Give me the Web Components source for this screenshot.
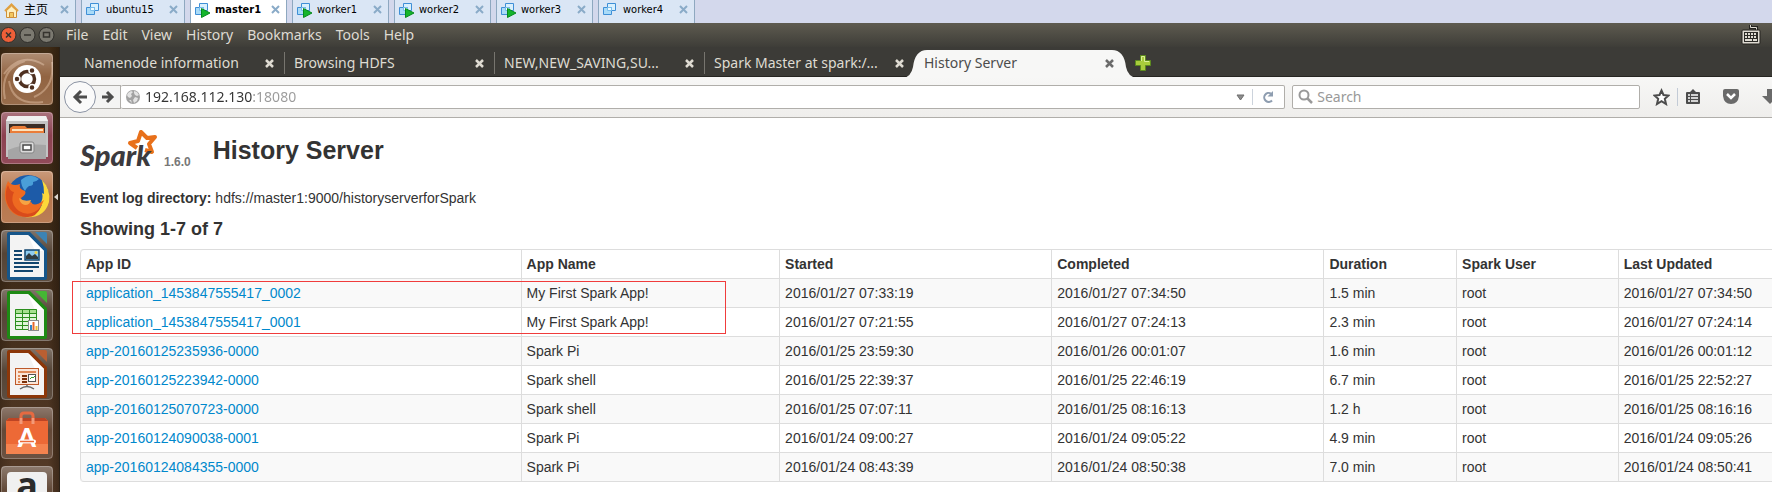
<!DOCTYPE html>
<html lang="en">
<head>
<meta charset="utf-8">
<title>History Server</title>
<style>
  body {
    margin: 0;
    height: 100vh;
    overflow: hidden;
    display: flex;
    flex-direction: column;
    background: #fff;
    font-family: "Noto Sans", "Open Sans", sans-serif;
    font-size: 14px;
  }

  .workspace {
    flex: 1;
    min-height: 0;
    display: flex;
  }

  .browser {
    flex: 1;
    min-width: 0;
    display: flex;
    flex-direction: column;
  }
</style>
</head>
<body>
  <vm-strip>
    <vm-tab icon="home">主页</vm-tab>
    <vm-tab icon="off">ubuntu15</vm-tab>
    <vm-tab icon="on" active>master1</vm-tab>
    <vm-tab icon="on">worker1</vm-tab>
    <vm-tab icon="on">worker2</vm-tab>
    <vm-tab icon="on">worker3</vm-tab>
    <vm-tab icon="off">worker4</vm-tab>
  </vm-strip>
  <menu-panel></menu-panel>
  <div class="workspace">
    <app-dock></app-dock>
    <div class="browser">
      <tab-bar>
        <browser-tab>Namenode information</browser-tab>
        <browser-tab>Browsing HDFS</browser-tab>
        <browser-tab>NEW,NEW_SAVING,SU...</browser-tab>
        <browser-tab>Spark Master at spark:/...</browser-tab>
        <browser-tab active>History Server</browser-tab>
      </tab-bar>
      <nav-toolbar></nav-toolbar>
      <history-page></history-page>
    </div>
  </div>

<script>
const MENUS = ["File", "Edit", "View", "History", "Bookmarks", "Tools", "Help"];

const COLUMNS = [
  { name: "App ID", width: "25.9%" },
  { name: "App Name", width: "15.2%" },
  { name: "Started", width: "16%" },
  { name: "Completed", width: "16%" },
  { name: "Duration", width: "7.8%" },
  { name: "Spark User", width: "9.5%" },
  { name: "Last Updated", width: "9.6%" },
];

const APPS = [
  ["application_1453847555417_0002", "My First Spark App!", "2016/01/27 07:33:19", "2016/01/27 07:34:50", "1.5 min", "root", "2016/01/27 07:34:50"],
  ["application_1453847555417_0001", "My First Spark App!", "2016/01/27 07:21:55", "2016/01/27 07:24:13", "2.3 min", "root", "2016/01/27 07:24:14"],
  ["app-20160125235936-0000", "Spark Pi", "2016/01/25 23:59:30", "2016/01/26 00:01:07", "1.6 min", "root", "2016/01/26 00:01:12"],
  ["app-20160125223942-0000", "Spark shell", "2016/01/25 22:39:37", "2016/01/25 22:46:19", "6.7 min", "root", "2016/01/25 22:52:27"],
  ["app-20160125070723-0000", "Spark shell", "2016/01/25 07:07:11", "2016/01/25 08:16:13", "1.2 h", "root", "2016/01/25 08:16:16"],
  ["app-20160124090038-0001", "Spark Pi", "2016/01/24 09:00:27", "2016/01/24 09:05:22", "4.9 min", "root", "2016/01/24 09:05:26"],
  ["app-20160124084355-0000", "Spark Pi", "2016/01/24 08:43:39", "2016/01/24 08:50:38", "7.0 min", "root", "2016/01/24 08:50:41"],
];

const MACHINE = /* html */`
  <g fill="#d9f0fd" stroke="#3f8fd6">
    <path d="M4.5 0.500h8v7h-8z"/>
    <path d="M0.500 4.500h8v7h-8z" fill="#a9dbf8"/>
    <path d="M4.500 4.500h4v3h-4z" fill="#eefaff" stroke="#79bdec"/>
  </g>`;

const VM_ICONS = {
  home: /* html */`
    <path d="M2.500 7.500V14.500H12.500V7.500L7.500 3z" fill="#fdf0c0" stroke="#cf9038"/>
    <path d="M1 8L7.500 1.500L14 8" fill="none" stroke="#e0a040" stroke-width="2"/>
    <path d="M5.500 9.500h4v5h-4z" fill="#f3c75e" stroke="#cf9038"/>`,
  off: MACHINE,
  on: MACHINE + /* html */`<path d="M6.500 5.500V14.500L15 10z" fill="#14b52c" stroke="#068a1c"/>`,
};

class VmStrip extends HTMLElement {
  constructor() {
    super();
    this.attachShadow({ mode: "open" });
  }

  connectedCallback() {
    this.shadowRoot.innerHTML = /* html */`
    <style>
      :host {
        display: flex;
        gap: 5px;
        height: 23px;
        background: #d3d8ec;
      }
    </style>
    <slot></slot>`;
  }
}

class VmTab extends HTMLElement {
  constructor() {
    super();
    this.attachShadow({ mode: "open" });
  }

  static get styles() {
    return /* css */`
      :host {
        display: flex;
        align-items: center;
        box-sizing: border-box;
        width: 97px;
        padding: 0 6px 4px 4px;
        border: solid #8ea8c0;
        border-width: 0 1px;
        background: #dae6f5;
        color: #000;
        font: 11px/16px "DejaVu Sans Condensed", "Noto Sans CJK SC", sans-serif;
      }

      :host([icon="home"]) {
        width: 76px;
        border-left: 0;
        font-size: 12px;
      }

      :host([icon="off"]:nth-child(2)) { width: 104px; }

      :host([active]) {
        background: #fff;
        font-weight: bold;
      }

      button {
        padding: 0;
        border: 0;
        background: none;
        color: inherit;
        font: inherit;
        text-align: left;
      }

      .label {
        flex: 1;
        display: flex;
        align-items: center;
        gap: 4px;
      }

      .label svg { margin-top: 3px; }
      .close { display: flex; }
    `;
  }

  connectedCallback() {
    this.shadowRoot.innerHTML = /* html */`
    <style>${VmTab.styles}</style>
    <button class="label">
      <svg width="16" height="16" aria-hidden="true">${VM_ICONS[this.getAttribute("icon")]}</svg>
      <slot></slot>
    </button>
    <button class="close" aria-label="Close machine">
      <svg width="9" height="9"><path d="M1 1L8 8M8 1L1 8" stroke="#8aabc8" stroke-width="2"/></svg>
    </button>`;
  }
}

class MenuPanel extends HTMLElement {
  constructor() {
    super();
    this.attachShadow({ mode: "open" });
  }

  static get styles() {
    return /* css */`
      :host {
        display: flex;
        align-items: center;
        box-sizing: border-box;
        height: 24px;
        padding-right: 11px;
        background: linear-gradient(#5e5b50, #3e3d38);
        color: #dfdbd2;
      }

      button {
        padding: 0;
        border: 0;
        background: none;
        color: inherit;
        font: inherit;
        line-height: 20px;
      }

      .controls {
        display: flex;
        gap: 2px;
        width: 66px;
      }

      .controls button, .keyboard { display: flex; }

      nav {
        flex: 1;
        display: flex;
        gap: 14px;
      }
    `;
  }

  renderControl(label, fill, glyph) {
    return /* html */`
      <button aria-label="${label}">
        <svg width="17" height="18">
          <circle cx="8.500" cy="9" r="7.500" fill="${fill}" stroke="#2f2e2a"/>
          <path d="${glyph}" fill="none" stroke="#35332e" stroke-width="1.500"/>
        </svg>
      </button>`;
  }

  connectedCallback() {
    this.shadowRoot.innerHTML = /* html */`
    <style>${MenuPanel.styles}</style>
    <div class="controls">
      ${this.renderControl("Close", "#ee5f38", "M6 6.500L11 11.500M11 6.500L6 11.500")}
      ${this.renderControl("Minimize", "#7b7970", "M5 9H12")}
      ${this.renderControl("Restore", "#7b7970", "M5.500 6.500H11.500V11H5.500z")}
    </div>
    <nav>${MENUS.map((name) => `<button>${name}</button>`).join("")}</nav>
    <button class="keyboard" aria-label="Keyboard layout">
      <svg width="20" height="22">
        <path d="M9.500 1V3.500H15.500V7" fill="none" stroke="#24231f" stroke-width="3"/>
        <path d="M9.500 1V3.500H15.500V7" fill="none" stroke="#dfdbd2"/>
        <rect x="1" y="6" width="18" height="14" rx="1" fill="#dfdbd2" stroke="#24231f"/>
        <rect x="3" y="8" width="14" height="10" fill="#2c2b27"/>
        <path d="M4 10H16M4 13H16" stroke="#dfdbd2" stroke-width="2" stroke-dasharray="2 1"/>
        <path d="M4 16H11M12 16H16" stroke="#dfdbd2" stroke-width="2"/>
      </svg>
    </button>`;
  }
}

// page shape shared by the three office launchers
const sheet = (dark, light, inner) => /* html */`
  <rect width="52" height="52" rx="4" fill="#4c3a2b"/>
  <rect width="52" height="52" rx="4" fill="url(#gloss)"/>
  <path d="M8 2H29L46 19V48Q46 50 44 50H8Q6 50 6 48V4Q6 2 8 2z" fill="${dark}"/>
  <path d="M34 2H44Q46 2 46 4V14z" fill="${light}"/>
  <path d="M9 5H27L43 21V47H9z" fill="#f3f3f3"/>
  <path d="M27 5L43 21H34z" fill="#fff"/>
  ${inner}`;

const LAUNCHERS = [
  { name: "Dash", art: /* html */`
    <rect width="52" height="52" rx="4" fill="#8c5c38"/>
    <g fill="none" stroke="#d6ae90" stroke-opacity=".55" stroke-width="2">
      <path d="M3 21Q20 -2 43 12M51 9Q54 35 33 44M42 49Q12 53 8 28M4 46Q-2 16 24 8"/>
    </g>
    <rect width="52" height="52" rx="4" fill="url(#gloss)"/>
    <circle cx="26" cy="26" r="14" fill="#fff"/>
    <circle cx="26" cy="26" r="7.500" fill="none" stroke="#4f3020" stroke-width="3.500"/>
    <g fill="#4f3020" stroke="#fff" stroke-width="1.500">
      <circle cx="16" cy="26" r="3"/><circle cx="31" cy="17.500" r="3"/><circle cx="31" cy="34.500" r="3"/>
    </g>` },
  { name: "Files", art: /* html */`
    <rect width="52" height="52" rx="4" fill="#863747"/>
    <rect width="52" height="52" rx="4" fill="url(#gloss)"/>
    <path d="M7 4H45L47 9V45H5V9z" fill="#c3c3c3"/>
    <path d="M7 4H45L47 9H5z" fill="#f1f1f1"/>
    <path d="M8 12H44V22H8z" fill="#3b2d27"/>
    <path d="M9 16L12 14H24L26 16H43V23H9z" fill="#ea7d39"/>
    <path d="M11 18H42" stroke="#fce2bd" stroke-width="2"/>
    <path d="M7 21H45V47H7z" fill="#a5a5a5"/>
    <path d="M7 21H45V33Q24 31 7 38z" fill="#bcbcbc"/>
    <rect x="19" y="30" width="14" height="11" rx="2" fill="#d9d9d9" stroke="#858585"/>
    <rect x="22" y="33" width="8" height="5" fill="#fff" stroke="#4a4a4a" stroke-width="1.500"/>` },
  { name: "Firefox", art: /* html */`
    <rect width="52" height="52" rx="4" fill="#b36f43"/>
    <rect width="52" height="52" rx="4" fill="url(#gloss)"/>
    <circle cx="27" cy="25" r="21" fill="#1d5ba8"/>
    <path d="M20 9Q29 1 38 8Q35 11 32 11Q33 15 28 15Q25 17 24 20Q20 15 20 9z" fill="#4a9fd8"/>
    <path d="M41 9Q50 18 48 31Q43 48 24 46Q37 43 41 34L38 35Q43 28 41 22L43 23Q43 15 41 9z" fill="#fcd83a"/>
    <path d="M7 10Q11 16 19 13Q17 18 24 20Q26 23 20 27Q21 33 30 31Q33 37 43 29Q38 43 26 46Q8 46 4 28Q3 18 7 10z" fill="#ee6a21"/>
    <path d="M7 14Q9 21 13 21Q8 32 18 40Q29 47 40 36Q35 47 25 46Q8 44 5 28Q4 20 7 14z" fill="#d94b1b"/>
    <path d="M18 27Q23 31 30 29Q29 34 24 34Q19 33 18 27z" fill="#f7a443"/>` },
  { name: "Writer", art: sheet("#16568a", "#3b83b4", /* html */`
    <path d="M13 21H21M13 25H21M13 29H21M13 33H38M13 37H38M13 41H32" stroke="#12466f" stroke-width="2"/>
    <rect x="24" y="20" width="14" height="10" fill="#8ecbf0" stroke="#12466f" stroke-width="1.500"/>
    <path d="M25 29V26L28 23L31 26L34 24L37 27V29z" fill="#303b40"/>
    <circle cx="35" cy="22.500" r="1.500" fill="#f2d448"/>`) },
  { name: "Calc", art: sheet("#1e8a14", "#45b634", /* html */`
    <rect x="14" y="20" width="22" height="20" fill="#dff5d8"/>
    <path d="M14 20H36V24H14z" fill="#a6e090"/>
    <path d="M14.500 20.500H35.500V40.500H14.500zM14 24.500H36M14 28.500H36M14 32.500H36M14 36.500H36M21.500 20V40M28.500 20V40" fill="none" stroke="#2b8f1e"/>
    <rect x="27.500" y="31.500" width="10" height="10" fill="#fff" stroke="#8b8b8b"/>
    <path d="M30 41V36" stroke="#2c86c9" stroke-width="2"/>
    <path d="M32.500 41V33" stroke="#e4692c" stroke-width="2"/>
    <path d="M35.500 41V37" stroke="#edbd2c" stroke-width="2"/>`) },
  { name: "Impress", art: sheet("#8c3709", "#b95f32", /* html */`
    <rect x="14.500" y="20.500" width="23" height="16" fill="#fbe6d8" stroke="#bd592a"/>
    <path d="M17 24H35" stroke="#e08a58" stroke-width="2"/>
    <path d="M17 28H19M17 31H19M17 34H19" stroke="#e08a58" stroke-width="2"/>
    <path d="M21 28H26M21 31H26M21 34H26" stroke="#7c3009" stroke-width="2"/>
    <rect x="27.500" y="26.500" width="7" height="7" fill="#fff" stroke="#555"/>
    <path d="M29 31L31 29L32 30L34 28" fill="none" stroke="#34a02c"/>
    <path d="M26 37V39M19 41Q26 36 33 41" fill="none" stroke="#666" stroke-width="1.500"/>`) },
  { name: "Software", art: /* html */`
    <rect width="52" height="52" rx="4" fill="#5c3f2d"/>
    <rect width="52" height="52" rx="4" fill="url(#gloss)"/>
    <path d="M20 18V9Q20 6 23 6H29Q32 6 32 9V18" fill="none" stroke="#e56a41" stroke-width="3"/>
    <path d="M5 14L8 11H44L47 14V47H5z" fill="#ed6936"/>
    <path d="M5 14L8 11H44L47 14z" fill="#bd4424"/>
    <path d="M20 11V17M32 11V17" stroke="#f39a78" stroke-width="3"/>
    <path d="M5 37H47V47H5z" fill="#f5834f"/>
    <text x="26" y="40" text-anchor="middle" font-family="Lato" font-size="26" font-weight="900" fill="#fff">A</text>
    <path d="M19 34.500H33" stroke="#fff" stroke-width="4" stroke-linecap="round"/>
    <path d="M19 34.500H33" stroke="#ed6936" stroke-width="1.500"/>` },
  { name: "Amazon", art: /* html */`
    <rect width="52" height="52" rx="4" fill="#5c4230"/>
    <rect width="52" height="52" rx="4" fill="url(#gloss)"/>
    <rect x="6" y="6" width="40" height="46" rx="4" fill="#f0f0f0"/>
    <text x="26" y="32" text-anchor="middle" font-family="Open Sans" font-size="36" font-weight="700" fill="#2b2b2b">a</text>` },
];

class AppDock extends HTMLElement {
  constructor() {
    super();
    this.attachShadow({ mode: "open" });
  }

  static get styles() {
    return /* css */`
      :host {
        display: block;
        box-sizing: border-box;
        width: 60px;
        overflow: hidden;
        padding: 6px 1px;
        border-right: 1px solid #2a2118;
        background: linear-gradient(90deg, rgba(20, 12, 4, .25), transparent 12px 48px, rgba(20, 12, 4, .35)), linear-gradient(#402c16, #3d2a18 45%, #563b27);
      }

      ul {
        display: flex;
        flex-direction: column;
        gap: 7px;
        margin: 0;
        padding: 0;
        list-style-type: none;
      }

      li {
        display: flex;
        align-items: center;
        gap: 1px;
      }

      button {
        display: flex;
        padding: 0;
        border: 0;
        background: none;
      }
    `;
  }

  renderLauncher(item) {
    const running = item.name === "Firefox"
      ? `<svg width="5" height="8" aria-hidden="true"><path d="M5 0V8L0 4z" fill="#dcd6cf"/></svg>`
      : "";
    return /* html */`
      <li>
        <button aria-label="${item.name}">
          <svg width="52" height="52">
            <defs>
              <linearGradient id="gloss" x1="0" y1="0" x2="0" y2="1">
                <stop offset="0" stop-color="#fff" stop-opacity=".3"/>
                <stop offset=".45" stop-color="#fff" stop-opacity=".05"/>
                <stop offset="1" stop-color="#fff" stop-opacity=".1"/>
              </linearGradient>
            </defs>
            ${item.art}
            <rect x=".5" y=".5" width="51" height="51" rx="4" fill="none" stroke="#fff" stroke-opacity=".25"/>
          </svg>
        </button>
        ${running}
      </li>`;
  }

  connectedCallback() {
    this.shadowRoot.innerHTML = /* html */`
    <style>${AppDock.styles}</style>
    <ul>${LAUNCHERS.map((item) => this.renderLauncher(item)).join("")}</ul>`;
  }
}

class TabBar extends HTMLElement {
  constructor() {
    super();
    this.attachShadow({ mode: "open" });
  }

  connectedCallback() {
    this.shadowRoot.innerHTML = /* html */`
    <style>
      :host {
        display: flex;
        align-items: center;
        box-sizing: border-box;
        height: 30px;
        padding-left: 15px;
        background: linear-gradient(#3c3b37 29px, #262521 29px);
      }

      button {
        display: flex;
        margin: 2px 0 0 10px;
        padding: 0;
        border: 0;
        background: none;
      }
    </style>
    <slot></slot>
    <button aria-label="New tab">
      <svg width="16" height="16">
        <path d="M5.500 .5h5v5h5v5h-5v5h-5v-5h-5v-5h5z" fill="#a9cc3c" stroke="#5c8a1e"/>
        <path d="M6.500 6V1.500h3V6.500H14" fill="none" stroke="#dbee9a"/>
      </svg>
    </button>`;
  }
}

class BrowserTab extends HTMLElement {
  constructor() {
    super();
    this.attachShadow({ mode: "open" });
  }

  static get styles() {
    return /* css */`
      :host {
        position: relative;
        display: flex;
        align-items: center;
        box-sizing: border-box;
        width: 210px;
        height: 22px;
        margin-top: 2px;
        padding: 0 10px 0 9px;
        border-right: 1px solid #77756f;
        color: #dfdbd2;
      }

      :host([active]), :host(:nth-child(4)) { border-color: transparent; }
      :host([active]) { color: #4c4c4c; }
      :host([active]) .close { color: #6b6b6b; }

      .shape {
        position: absolute;
        left: -12px;
        bottom: -4px;
      }

      button {
        position: relative;
        padding: 0;
        border: 0;
        background: none;
        color: inherit;
        font: inherit;
        line-height: 20px;
        text-align: left;
        white-space: nowrap;
      }

      .title { flex: 1; }
      .close { display: flex; }
    `;
  }

  connectedCallback() {
    const shape = this.hasAttribute("active")
      ? `<svg class="shape" width="234" height="28" aria-hidden="true"><path d="M0 28Q8 27 10 17Q12 0 24 0H209Q221 0 223 17Q225 27 234 28z" fill="#f7f7f6"/></svg>`
      : "";
    this.shadowRoot.innerHTML = /* html */`
    <style>${BrowserTab.styles}</style>
    ${shape}
    <button class="title"><slot></slot></button>
    <button class="close" aria-label="Close tab">
      <svg width="9" height="9"><path d="M1 1L8 8M8 1L1 8" stroke="currentColor" stroke-width="2.500"/></svg>
    </button>`;
  }
}

class NavToolbar extends HTMLElement {
  constructor() {
    super();
    this.attachShadow({ mode: "open" });
  }

  static get styles() {
    return /* css */`
      :host {
        display: flex;
        align-items: center;
        height: 40px;
        padding-left: 4px;
        border-bottom: 1px solid #b0aeaa;
        background: linear-gradient(#f7f7f6, #efeeec);
        color: #4c4c4c;
      }

      button {
        display: flex;
        align-items: center;
        justify-content: center;
        padding: 0;
        border: 0;
        background: none;
        color: inherit;
      }

      .back {
        box-sizing: border-box;
        width: 32px;
        height: 32px;
        margin-right: -6px;
        border: 1px solid #8b93a3;
        border-radius: 50%;
        background: #fafafa;
        z-index: 1;
      }

      .forward {
        box-sizing: border-box;
        width: 31px;
        height: 24px;
        padding-left: 4px;
        border: 1px solid #b0aeaa;
        background: #f4f4f3;
      }

      .field {
        box-sizing: border-box;
        min-width: 0;
        height: 24px;
        display: flex;
        align-items: center;
        gap: 4px;
        border: 1px solid #b0aeaa;
        border-radius: 2px;
        background: #fff;
      }

      .address {
        flex: 27;
        margin-right: 7px;
        padding: 0 9px 0 4px;
        border-left: 0;
      }

      .search {
        flex: 8;
        padding-left: 5px;
      }

      input {
        flex: 1;
        min-width: 0;
        padding: 0;
        border: 0;
        outline: 0;
        background: none;
        color: #333;
        font: inherit;
        line-height: 20px;
      }

      /* the port is dimmed after the host */
      .address input {
        background: linear-gradient(90deg, #333 107px, #9a9a9a 107px);
        -webkit-background-clip: text;
        background-clip: text;
        color: transparent;
      }

      input::placeholder {
        color: #999;
        opacity: 1;
      }

      .reload {
        margin-left: 2px;
        padding-left: 8px;
        border-left: 1px solid #ccd3dc;
      }

      .tools {
        display: flex;
        width: 132px;
        box-sizing: border-box;
        padding-left: 13px;
        overflow: hidden;
      }

      .tools button { flex: none; }
      .star { margin-right: 7px; }
      .list { padding-left: 7px; border-left: 1px solid #c3cbd6; }
      .pocket { margin: 0 21px; }
    `;
  }

  connectedCallback() {
    this.shadowRoot.innerHTML = /* html */`
    <style>${NavToolbar.styles}</style>
    <button class="back" aria-label="Back">
      <svg width="16" height="16"><path d="M15 8H4M9 2L3 8L9 14" fill="none" stroke="currentColor" stroke-width="3"/></svg>
    </button>
    <button class="forward" aria-label="Forward">
      <svg width="14" height="14"><path d="M1 7H10M6 2L11 7L6 12" fill="none" stroke="currentColor" stroke-width="3"/></svg>
    </button>
    <div class="field address">
      <svg width="16" height="16" aria-hidden="true">
        <circle cx="8" cy="8" r="7" fill="#a2a2a2"/>
        <path d="M3 4L6 2L8 3L6 5L7 7L5 9L3 8L2 6zM9 2L12 3L14 6L12 7L10 6L9 4zM10 8L13 9L12 12L9 14L8 11zM4 11L6 11L7 14z" fill="#e3e3e3"/>
      </svg>
      <input type="text" aria-label="Address" value="192.168.112.130:18080">
      <button aria-label="Show history">
        <svg width="10" height="7"><path d="M1 1H8L4.500 6z" fill="#8d8d8d" stroke="#6e6e6e"/></svg>
      </button>
      <button class="reload" aria-label="Reload">
        <svg width="14" height="16"><path d="M11 11.500A4.500 4.500 0 1 1 10 4.500" fill="none" stroke="#8e9db0" stroke-width="2"/><path d="M12 2V7.500H6.500z" fill="#8e9db0"/></svg>
      </button>
    </div>
    <div class="field search">
      <svg width="15" height="16" aria-hidden="true"><circle cx="6" cy="6" r="4.500" fill="none" stroke="#999" stroke-width="2"/><path d="M9 9L14 14" stroke="#999" stroke-width="2.500"/></svg>
      <input type="text" aria-label="Search" placeholder="Search">
    </div>
    <div class="tools">
      <button class="star" aria-label="Bookmark this page">
        <svg width="17" height="18"><path d="M8.500 2.500L10.500 7L15.500 7.500L11.800 10.800L13 16L8.500 13.200L4 16L5.200 10.800L1.500 7.500L6.500 7z" fill="#fff" stroke="currentColor" stroke-width="2"/></svg>
      </button>
      <button class="list" aria-label="Show bookmarks">
        <svg width="16" height="18">
          <path d="M2 4H5L8 1L11 4H14Q15 4 15 5V15Q15 16 14 16H2Q1 16 1 15V5Q1 4 2 4z" fill="currentColor"/>
          <path d="M3 7H5M6 7H13M3 10H5M6 10H13M3 13H5M6 13H13" stroke="#fff" stroke-width="1.500"/>
        </svg>
      </button>
      <button class="pocket" aria-label="Save to Pocket">
        <svg width="18" height="18"><path d="M3 1H15Q17 1 17 3V8Q16 16 9 16Q2 16 1 8V3Q1 1 3 1z" fill="#6a6a6a"/><path d="M5 6L9 10L13 6" fill="none" stroke="#fff" stroke-width="2.500"/></svg>
      </button>
      <button aria-label="Downloads">
        <svg width="18" height="18"><path d="M6 1H12V8H17L9 16L1 8H6z" fill="#6a6a6a"/></svg>
      </button>
    </div>`;
  }
}

class AppTable extends HTMLElement {
  constructor() {
    super();
    this.attachShadow({ mode: "open" });
  }

  static get styles() {
    return /* css */`
      :host {
        display: block;
        position: relative;
      }

      table {
        width: 100%;
        table-layout: fixed;
        border: 1px solid #ddd;
        border-left: 0;
        border-collapse: separate;
        border-spacing: 0;
        border-radius: 4px;
        line-height: 20px;
      }

      th, td {
        padding: 4px 5px;
        border-left: 1px solid #ddd;
        text-align: left;
        white-space: nowrap;
      }

      th:first-child { border-top-left-radius: 4px; }
      tr:last-child td:first-child { border-bottom-left-radius: 4px; }
      td { border-top: 1px solid #ddd; }
      tbody tr:nth-child(odd) { background: #f9f9f9; }

      a {
        color: #08c;
        text-decoration: none;
      }

      .marker {
        position: absolute;
        top: 32px;
        left: -8px;
        box-sizing: border-box;
        width: 38.4%;
        height: 53px;
        border: 1px solid #f03c3c;
        pointer-events: none;
      }
    `;
  }

  renderRow([id, ...cells]) {
    return /* html */`<tr><td><a href="#${id}">${id}</a></td>${cells.map((cell) => `<td>${cell}</td>`).join("")}</tr>`;
  }

  connectedCallback() {
    this.shadowRoot.innerHTML = /* html */`
    <style>${AppTable.styles}</style>
    <table>
      <colgroup>${COLUMNS.map((col) => `<col style="width: ${col.width}">`).join("")}</colgroup>
      <thead><tr>${COLUMNS.map((col) => `<th>${col.name}</th>`).join("")}</tr></thead>
      <tbody>${APPS.map((app) => this.renderRow(app)).join("")}</tbody>
    </table>
    <div class="marker"></div>`;
  }
}

class HistoryPage extends HTMLElement {
  constructor() {
    super();
    this.attachShadow({ mode: "open" });
  }

  static get styles() {
    return /* css */`
      :host {
        display: block;
        flex: 1;
        min-height: 0;
        overflow: hidden;
        padding: 10px 0 0 20px;
        background: #fff;
        color: #333;
        font: 14px/20px "Liberation Sans", Arial, sans-serif;
      }

      header {
        display: flex;
        align-items: flex-end;
      }

      .logo { display: flex; }

      .version {
        margin: 0 22px 0 4px;
        color: #777;
        font-size: 12px;
        font-weight: bold;
      }

      h1, h2, p { margin: 0; }
      h1 { font-size: 25px; line-height: 44px; }
      h2 { margin: 11px 0 10px; font-size: 18px; line-height: 20px; }
      p { margin-top: 16px; }

      /* the last column runs past the window edge */
      app-table { margin-right: -10px; }
    `;
  }

  connectedCallback() {
    this.shadowRoot.innerHTML = /* html */`
    <style>${HistoryPage.styles}</style>
    <header>
      <a class="logo" href="#">
        <svg width="80" height="44">
          <path d="M57 20L50 15L58 13L61 4L67 10L75 9L69 16L72 24L65 22" fill="none" stroke="#e8701a" stroke-width="4" stroke-linejoin="round"/>
          <text x="0" y="38" font-family="Lato" font-size="29" font-weight="900" font-style="italic" fill="#3c3a3e">Spark</text>
        </svg>
      </a>
      <span class="version">1.6.0</span>
      <h1>History Server</h1>
    </header>
    <p><strong>Event log directory:</strong> hdfs://master1:9000/historyserverforSpark</p>
    <h2>Showing 1-7 of 7</h2>
    <app-table></app-table>`;
  }
}

customElements.define("vm-strip", VmStrip);
customElements.define("vm-tab", VmTab);
customElements.define("menu-panel", MenuPanel);
customElements.define("app-dock", AppDock);
customElements.define("tab-bar", TabBar);
customElements.define("browser-tab", BrowserTab);
customElements.define("nav-toolbar", NavToolbar);
customElements.define("app-table", AppTable);
customElements.define("history-page", HistoryPage);
</script>
</body>
</html>
